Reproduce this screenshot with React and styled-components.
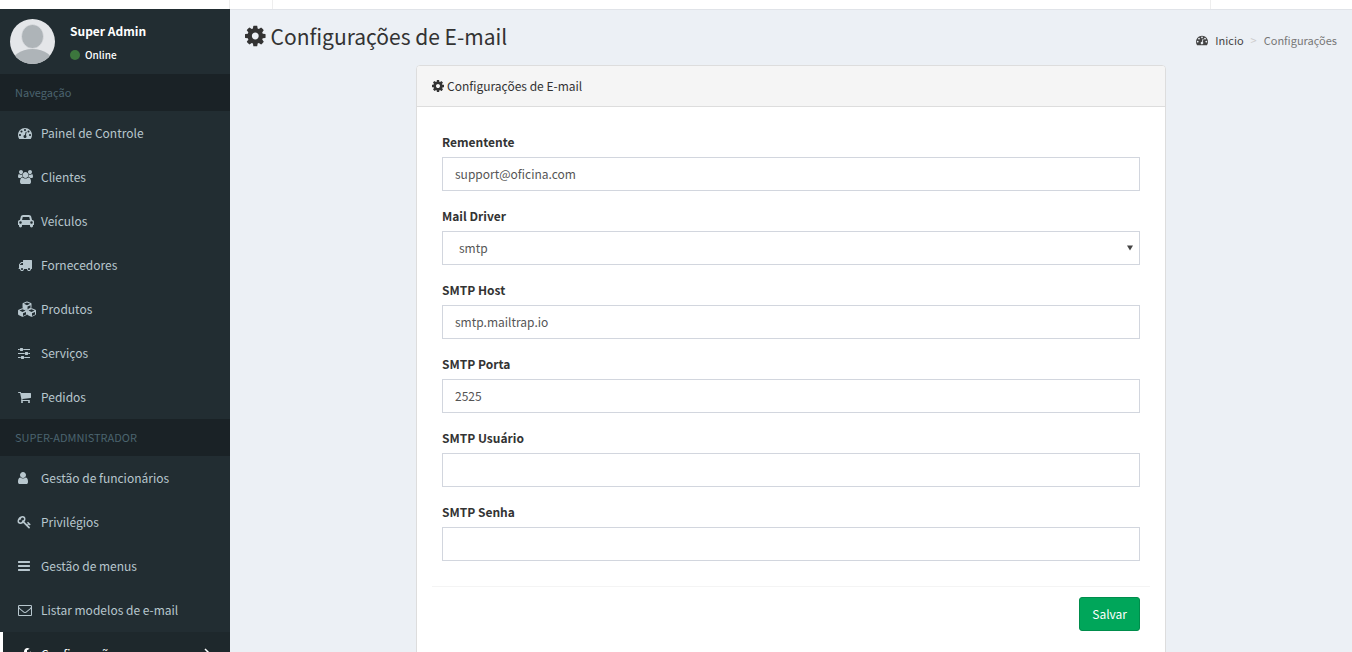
import React from "react";
import styled, { createGlobalStyle } from "styled-components";

const GlobalStyle = createGlobalStyle`
  *, *::before, *::after { box-sizing: border-box; }
  body {
    margin: 0;
    background: #ecf0f5;
    color: #333;
    font-family: "Noto Sans CJK SC", "Open Sans", sans-serif;
    font-size: 12px;
    line-height: 20px;
  }
  a { color: inherit; text-decoration: none; }
  ul, ol { list-style: none; margin: 0; padding: 0; }
`;

/* ---------- icons ---------- */

const dot = (x, y) =>
  `M${x} ${y}q0-53-37.5-90.5t-90.5-37.5-90.5 37.5-37.5 90.5 37.5 90.5 90.5 37.5 90.5-37.5 37.5-90.5z`;
const bar = (y) =>
  `M1664 ${y}v128q0 26-19 45t-45 19h-1408q-26 0-45-19t-19-45v-128q0-26 19-45t45-19h1408q26 0 45 19t19 45z`;
const cube = (x, y) =>
  `M${x} ${y}q26 0 50 10l448 192q78 34 78 118v416q0 78-68 114l-448 224q-60 28-116 0l-448-224q-68-36-68-114v-416q0-84 78-118l448-192q24-10 46-10zm0 128l-394 169 394 169 394-169zm64 864l384-192v-314l-384 164z`;

const icons = {
  cog: {
    x: 128,
    w: 1536,
    d: "M1152 896q0-106-75-181t-181-75-181 75-75 181 75 181 181 75 181-75 75-181zm512-109v222q0 12-8 23t-20 13l-185 28q-19 54-39 91 35 50 107 138 10 12 10 25t-9 23q-27 37-99 108t-94 71q-12 0-26-9l-138-108q-44 23-91 38-16 136-29 186-7 28-36 28h-222q-14 0-24.5-8.5t-11.5-21.5l-28-184q-49-16-90-37l-141 107q-10 9-25 9-14 0-25-11-126-114-165-168-7-10-7-23 0-12 8-23 15-21 51-66.5t54-70.5q-27-50-41-99l-183-27q-13-2-21-12.5t-8-23.5v-222q0-12 8-23t19-13l186-28q14-46 39-92-40-57-107-138-10-12-10-24 0-10 9-23 26-36 98.5-107.5t94.5-71.5q13 0 26 10l138 107q44-23 91-38 16-136 29-186 7-28 36-28h222q14 0 24.5 8.5t11.5 21.5l28 184q49 16 90 37l142-107q9-9 24-9 13 0 25 10 129 119 165 170 7 8 7 22 0 12-8 23-15 21-51 66.5t-54 70.5q26 50 41 98l183 28q13 2 21 12.5t8 23.5z",
  },
  dashboard: {
    x: 0,
    w: 1792,
    d:
      dot(384, 1152) +
      dot(576, 704) +
      "M1004 1185l101-382q6-26-7.5-48.5t-38.5-29.5-48 6.5-30 39.5l-101 382q-60 5-107 43.5t-63 98.5q-20 77 20 146t117 89 146-20 89-117q16-60-6-117t-72-91z" +
      dot(1664, 1152) +
      dot(1024, 512) +
      dot(1472, 704) +
      "M1792 1152q0 261-141 483-19 29-54 29h-1402q-35 0-54-29-141-221-141-483 0-182 71-348t191-286 286-191 348-71 348 71 286 191 191 286 71 348z",
  },
  users: {
    x: -64,
    w: 1920,
    d: "M529 896q-162 5-265 128h-134q-82 0-138-40.5t-56-118.5q0-353 124-353 6 0 43.5 21t97.5 42.5 119 21.5q67 0 133-23-5 37-5 66 0 139 81 256zm1071 637q0 120-73 189.5t-194 69.5h-874q-121 0-194-69.5t-73-189.5q0-53 3.5-103.5t14-109 26.5-108.5 43-97.5 62-81 85.5-53.5 111.5-20q10 0 43 21.5t73 48 107 48 135 21.5 135-21.5 107-48 73-48 43-21.5q61 0 111.5 20t85.5 53.5 62 81 43 97.5 26.5 108.5 14 109 3.5 103.5zm-1024-1277q0 106-75 181t-181 75-181-75-75-181 75-181 181-75 181 75 75 181zm704 384q0 159-112.5 271.5t-271.5 112.5-271.5-112.5-112.5-271.5 112.5-271.5 271.5-112.5 271.5 112.5 112.5 271.5zm576 225q0 78-56 118.5t-138 40.5h-134q-103-123-265-128 81-117 81-256 0-29-5-66 66 23 133 23 59 0 119-21.5t97.5-42.5 43.5-21q124 0 124 353zm-128-609q0 106-75 181t-181 75-181-75-75-181 75-181 181-75 181 75 75 181z",
  },
  car: {
    x: 0,
    w: 2048,
    d: "M480 1088q0-66-47-113t-113-47-113 47-47 113 47 113 113 47 113-47 47-113zm36-320h1016l-89-357q-2-8-14-17.5t-21-9.5h-768q-9 0-21 9.5t-14 17.5zm1372 320q0-66-47-113t-113-47-113 47-47 113 47 113 113 47 113-47 47-113zm160-96v384q0 14-9 23t-23 9h-96v128q0 80-56 136t-136 56-136-56-56-136v-128h-1024v128q0 80-56 136t-136 56-136-56-56-136v-128h-96q-14 0-23-9t-9-23v-384q0-93 65.5-158.5t158.5-65.5h28l105-419q23-94 104-157.5t179-63.5h768q98 0 179 63.5t104 157.5l105 419h28q93 0 158.5 65.5t65.5 158.5z",
  },
  truck: {
    x: 0,
    w: 1792,
    d: "M640 1408q0-52-38-90t-90-38-90 38-38 90 38 90 90 38 90-38 38-90zm-384-512h384v-256h-158q-13 0-22 9l-195 195q-9 9-9 22v30zm1280 512q0-52-38-90t-90-38-90 38-38 90 38 90 90 38 90-38 38-90zm256-1088v1024q0 15-4 26.5t-13.5 18.5-16.5 11.5-23.5 6-22.5 2-25.5 0-22.5-.5q0 106-75 181t-181 75-181-75-75-181h-384q0 106-75 181t-181 75-181-75-75-181h-64q-3 0-22.5.5t-25.5 0-22.5-2-23.5-6-16.5-11.5-13.5-18.5-4-26.5q0-26 19-45t45-19v-320q0-8-.5-35t0-38 2.5-34.5 6.5-37 14-30.5 22.5-30l198-198q19-19 50.5-32t58.5-13h160v-192q0-26 19-45t45-19h1024q26 0 45 19t19 45z",
  },
  cubes: { x: 0, w: 2304, d: cube(1152, -64) + cube(576, 800) + cube(1728, 800) },
  sliders: {
    x: 0,
    w: 1536,
    d: "M352 1408v128h-352v-128h352zm352-128q26 0 45 19t19 45v256q0 26-19 45t-45 19h-256q-26 0-45-19t-19-45v-256q0-26 19-45t45-19h256zm160-384v128h-864v-128h864zm-640-512v128h-224v-128h224zm1312 1024v128h-736v-128h736zm-960-1152q26 0 45 19t19 45v256q0 26-19 45t-45 19h-256q-26 0-45-19t-19-45v-256q0-26 19-45t45-19h256zm640 512q26 0 45 19t19 45v256q0 26-19 45t-45 19h-256q-26 0-45-19t-19-45v-256q0-26 19-45t45-19h256zm320 128v128h-224v-128h224zm0-512v128h-864v-128h864z",
  },
  cart: {
    x: 64,
    w: 1664,
    d: "M704 1536q0 52-38 90t-90 38-90-38-38-90 38-90 90-38 90 38 38 90zm896 0q0 52-38 90t-90 38-90-38-38-90 38-90 90-38 90 38 38 90zm128-1088v512q0 24-16.5 42.5t-40.5 21.5l-1044 122q13 60 13 70 0 16-24 64h920q26 0 45 19t19 45-19 45-45 19h-1024q-26 0-45-19t-19-45q0-11 8-31.5t16-36 21.5-40 15.5-29.5l-177-823h-204q-26 0-45-19t-19-45 19-45 45-19h256q16 0 28.5 6.5t19.5 15.5 13 24.5 8 26 5.5 29.5 4.5 26h1201q26 0 45 19t19 45z",
  },
  user: {
    x: 256,
    w: 1280,
    d: "M1536 1399q0 109-62.5 187t-150.5 78h-854q-88 0-150.5-78t-62.5-187q0-85 8.5-160.5t31.5-152 58.5-131 94-89 134.5-34.5q131 128 313 128t313-128q76 0 134.5 34.5t94 89 58.5 131 31.5 152 8.5 160.5zm-256-887q0 159-112.5 271.5t-271.5 112.5-271.5-112.5-112.5-271.5 112.5-271.5 271.5-112.5 271.5 112.5 112.5 271.5z",
  },
  key: {
    x: 64,
    w: 1664,
    d: "M832 512q0-80-56-136t-136-56-136 56-56 136q0 42 19 83-41-19-83-19-80 0-136 56t-56 136 56 136 136 56 136-56 56-136q0-42-19-83 41 19 83 19 80 0 136-56t56-136zm851 704q0 17-49 66t-66 49q-9 0-28.5-16t-36.5-33-38.5-40-24.5-26l-96 96 220 220q28 28 28 68 0 42-39 81t-81 39q-40 0-68-28l-671-671q-176 131-365 131-163 0-265.5-102.5t-102.5-265.5q0-160 95-313t248-248 313-95q163 0 265.5 102.5t102.5 265.5q0 189-131 365l355 355 96-96q-3-3-26-24.5t-40-38.5-33-36.5-16-28.5q0-17 49-66t66-49q13 0 23 10 6 6 46 44.5t82 79.5 86.5 86 73 78 28.5 41z",
  },
  bars: { x: 128, w: 1536, d: bar(1344) + bar(832) + bar(320) },
  envelope: {
    x: 0,
    w: 1792,
    d: "M1664 1504v-768q-32 36-69 66-268 206-426 338-51 43-83 67t-86.5 48.5-102.5 24.5h-2q-48 0-102.5-24.5t-86.5-48.5-83-67q-158-132-426-338-37-30-69-66v768q0 13 9.5 22.5t22.5 9.5h1472q13 0 22.5-9.5t9.5-22.5zm0-1051v-24.5l-.5-13-3-12.5-5.5-9-9-7.5-14-2.5h-1472q-13 0-22.5 9.5t-9.5 22.5q0 168 147 284 193 152 401 317 6 5 35 29.5t46 37.5 44.5 31.5 50.5 27.5 43 9h2q20 0 43-9t50.5-27.5 44.5-31.5 46-37.5 35-29.5q208-165 401-317 54-43 100.5-115.5t46.5-131.5zm128-37v1088q0 66-47 113t-113 47h-1472q-66 0-113-47t-47-113v-1088q0-66 47-113t113-47h1472q66 0 113 47t47 113z",
  },
  wrench: {
    x: 64,
    w: 1664,
    d: "M448 1472q0-26-19-45t-45-19-45 19-19 45 19 45 45 19 45-19 19-45zm644-420l-682 682q-37 37-90 37-52 0-91-37l-106-108q-38-36-38-90 0-53 38-91l681-681q39 98 114.5 173.5t173.5 114.5zm634-435q0 39-23 106-47 134-164.5 217.5t-258.5 83.5q-185 0-316.5-131.5t-131.5-316.5 131.5-316.5 316.5-131.5q58 0 121.5 16.5t107.5 46.5q16 11 16 28t-16 28l-293 169v224l193 107q5-3 79-48.5t135.5-81 70.5-35.5q15 0 23.5 10t8.5 25z",
  },
};

const Glyph = styled.svg`
  display: block;
  flex: none;
  height: ${(p) => p.$size}px;
  fill: currentColor;
  overflow: visible;
`;

function Icon({ name, size = 14 }) {
  const { x, w, d } = icons[name];
  return (
    <Glyph $size={size} viewBox={`${x} 0 ${w} 1792`} aria-hidden="true">
      <path fillRule="evenodd" d={d} />
    </Glyph>
  );
}

/* ---------- page frame ---------- */

const Page = styled.div`
  display: flex;
  flex-direction: column;
  height: 100vh;
  overflow: hidden;
`;

const TopBar = styled.header`
  display: flex;
  flex: none;
  height: 9px;
  background: #fff;
`;

const TopCell = styled.div`
  width: ${(p) => p.$width}px;
  border-right: 1px solid #eee;
`;

const TopEnd = styled.div`
  width: 142px;
  margin-left: auto;
  border-left: 1px solid #eee;
`;

const Columns = styled.div`
  display: flex;
  flex: 1;
  min-height: 0;
`;

/* ---------- sidebar ---------- */

const Sidebar = styled.aside`
  flex: none;
  width: 230px;
  overflow: hidden;
  background: #222d32;
  color: #b8c7ce;
`;

const UserPanel = styled.div`
  display: flex;
  gap: 15px;
  height: 65px;
  padding: 10px;
  color: #fff;
`;

const Avatar = styled.svg`
  width: 45px;
  height: 45px;
  border-radius: 50%;
`;

const UserInfo = styled.div`
  padding-top: 2px;
`;

const UserName = styled.p`
  margin: 0 0 4px;
  font-weight: 700;
`;

const Status = styled.a`
  display: flex;
  align-items: center;
  gap: 5px;
  font-size: 10px;
  font-weight: 500;
`;

const StatusDot = styled.span`
  width: 10px;
  height: 10px;
  border-radius: 50%;
  background: #3c763d;
`;

const MenuTitle = styled.li`
  height: 37px;
  padding: 0 15px;
  background: #1a2226;
  color: #4b646f;
  font-size: 11px;
  line-height: 37px;
`;

const MenuLink = styled.a`
  display: flex;
  align-items: center;
  height: 44px;
  padding: 0 18px 0 15px;
  border-left: 3px solid ${(p) => (p.$active ? "#fff" : "transparent")};
  background: ${(p) => (p.$active ? "#1e282c" : "transparent")};
  color: ${(p) => (p.$active ? "#fff" : "inherit")};
`;

const IconSlot = styled.span`
  width: 23px;
`;

const Arrow = styled.svg`
  width: 8px;
  height: 12px;
  margin-left: auto;
  fill: none;
  stroke: currentColor;
  stroke-width: 1.5;
`;

/* ---------- content ---------- */

const Content = styled.main`
  flex: 1;
  min-width: 0;
  padding: 14px 15px 0;
  border-top: 1px solid #e0e3e8;
`;

const ContentHeader = styled.div`
  display: flex;
  justify-content: space-between;
  align-items: flex-start;
`;

const Title = styled.h1`
  display: flex;
  align-items: center;
  gap: 5px;
  margin: 0;
  font-size: 21px;
  font-weight: 400;
  line-height: 24px;
`;

const Breadcrumb = styled.ol`
  display: flex;
  align-items: center;
  gap: 7px;
  padding-top: 6px;
  font-size: 11px;
  color: #777;
`;

const Crumb = styled.a`
  display: flex;
  align-items: center;
  gap: 7px;
  color: #444;
`;

const Separator = styled.li`
  color: #ccc;
`;

const Panel = styled.section`
  max-width: 750px;
  margin: 15px auto 0;
  border: 1px solid #ddd;
  border-radius: 4px;
  background: #fff;
`;

const PanelHeading = styled.div`
  display: flex;
  align-items: center;
  gap: 3px;
  padding: 10px 15px;
  border-bottom: 1px solid #ddd;
  border-radius: 3px 3px 0 0;
  background: #f5f5f5;
`;

const Form = styled.form`
  padding: 25px 15px 15px;
`;

const Field = styled.div`
  padding: 0 10px;
  margin-bottom: 15px;
`;

const Label = styled.label`
  display: block;
  margin-bottom: 5px;
  font-weight: 700;
`;

const control = `
  display: block;
  width: 100%;
  height: 34px;
  border: 1px solid #d2d6de;
  border-radius: 0;
  background: #fff;
  color: #555;
  font: inherit;
  outline: none;
`;

const Input = styled.input`
  ${control}
  padding: 5px 12px 7px;
`;

const Select = styled.select`
  ${control}
  padding: 6px 16px;
  appearance: none;
`;

const SelectBox = styled.div`
  position: relative;
`;

const Caret = styled.svg`
  position: absolute;
  top: 14px;
  right: 7px;
  width: 6px;
  height: 6px;
  fill: #444;
  pointer-events: none;
`;

const Actions = styled.div`
  display: flex;
  justify-content: flex-end;
  margin-top: 25px;
  padding: 10px;
  border-top: 1px solid #f4f4f4;
`;

const SaveButton = styled.button`
  height: 34px;
  padding: 0 12px;
  border: 1px solid #008d4c;
  border-radius: 3px;
  background: #00a65a;
  color: #fff;
  font: inherit;
`;

const menu = [
  {
    title: "Navegação",
    items: [
      ["dashboard", "Painel de Controle"],
      ["users", "Clientes"],
      ["car", "Veículos"],
      ["truck", "Fornecedores"],
      ["cubes", "Produtos"],
      ["sliders", "Serviços"],
      ["cart", "Pedidos"],
    ],
  },
  {
    title: "SUPER-ADMNISTRADOR",
    items: [
      ["user", "Gestão de funcionários"],
      ["key", "Privilégios"],
      ["bars", "Gestão de menus"],
      ["envelope", "Listar modelos de e-mail"],
      ["wrench", "Configurações", true],
    ],
  },
];

const fields = [
  { id: "sender", label: "Rementente", value: "support@oficina.com" },
  { id: "driver", label: "Mail Driver", value: "smtp", select: true },
  { id: "host", label: "SMTP Host", value: "smtp.mailtrap.io" },
  { id: "port", label: "SMTP Porta", value: "2525" },
  { id: "user", label: "SMTP Usuário", value: "" },
  { id: "password", label: "SMTP Senha", value: "", type: "password" },
];

export default function App() {
  return (
    <>
      <GlobalStyle />
      <Page>
        <TopBar>
          <TopCell $width={230} />
          <TopCell $width={43} />
          <TopEnd />
        </TopBar>
        <Columns>
          <Sidebar>
            <UserPanel>
              <Avatar viewBox="0 0 45 45" aria-hidden="true">
                <rect width="45" height="45" fill="#e4e6e9" />
                <ellipse cx="22.5" cy="46" rx="22" ry="16" fill="#aeb4b8" />
                <ellipse cx="22.5" cy="17.500" rx="11" ry="12" fill="#aeb4b8" stroke="#e4e6e9" strokeWidth="0.6" />
              </Avatar>
              <UserInfo>
                <UserName>Super Admin</UserName>
                <Status href="#">
                  <StatusDot />
                  Online
                </Status>
              </UserInfo>
            </UserPanel>
            <nav>
              <ul>
                {menu.map((group) => (
                  <React.Fragment key={group.title}>
                    <MenuTitle>{group.title}</MenuTitle>
                    {group.items.map(([icon, text, active]) => (
                      <li key={text}>
                        <MenuLink href="#" $active={active}>
                          <IconSlot>
                            <Icon name={icon} />
                          </IconSlot>
                          {text}
                          {active && (
                            <Arrow viewBox="0 0 8 12" aria-hidden="true">
                              <path d="M1 1l5 5-5 5" />
                            </Arrow>
                          )}
                        </MenuLink>
                      </li>
                    ))}
                  </React.Fragment>
                ))}
              </ul>
            </nav>
          </Sidebar>
          <Content>
            <ContentHeader>
              <Title>
                <Icon name="cog" size={24} />
                Configurações de E-mail
              </Title>
              <Breadcrumb>
                <li>
                  <Crumb href="#">
                    <Icon name="dashboard" size={12} />
                    Inicio
                  </Crumb>
                </li>
                <Separator aria-hidden="true">&gt;</Separator>
                <li>Configurações</li>
              </Breadcrumb>
            </ContentHeader>
            <Panel>
              <PanelHeading>
                <Icon name="cog" />
                Configurações de E-mail
              </PanelHeading>
              <Form>
                {fields.map((f) => (
                  <Field key={f.id}>
                    <Label htmlFor={f.id}>{f.label}</Label>
                    {f.select ? (
                      <SelectBox>
                        <Select id={f.id} defaultValue={f.value}>
                          <option>{f.value}</option>
                        </Select>
                        <Caret viewBox="0 0 7 6" aria-hidden="true">
                          <path d="M0 0h7l-3.500 6z" />
                        </Caret>
                      </SelectBox>
                    ) : (
                      <Input id={f.id} type={f.type || "text"} defaultValue={f.value} />
                    )}
                  </Field>
                ))}
                <Actions>
                  <SaveButton type="button">Salvar</SaveButton>
                </Actions>
              </Form>
            </Panel>
          </Content>
        </Columns>
      </Page>
    </>
  );
}
